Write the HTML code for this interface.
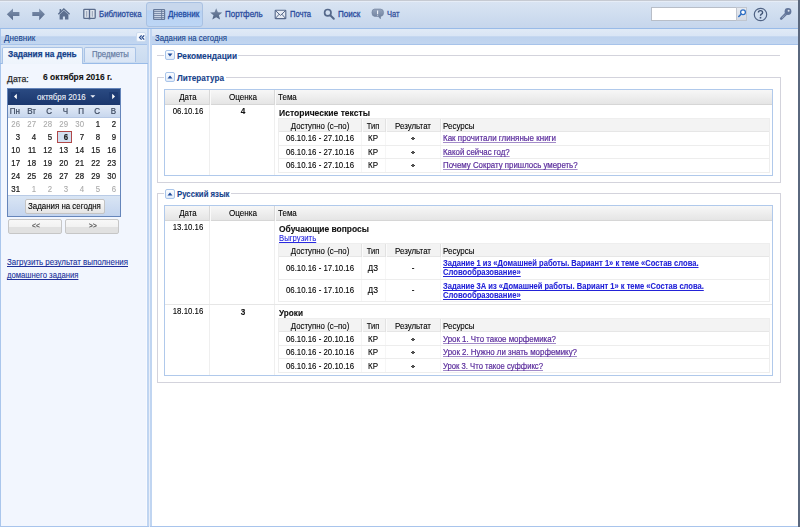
<!DOCTYPE html>
<html><head><meta charset="utf-8">
<style>
*{box-sizing:border-box;margin:0;padding:0}
html,body{width:800px;height:527px;overflow:hidden;background:#fff;font-family:"Liberation Sans",sans-serif;font-size:8px;color:#000;position:relative}
.a{position:absolute;white-space:nowrap;text-decoration-skip-ink:none;-webkit-text-stroke-width:0.1px}
svg{position:absolute;overflow:visible}
</style></head>
<body><div style="position:absolute;left:0;top:0;width:800px;height:527px;filter:blur(0.3px)">

<div class="a" style="left:0px;top:0px;width:800px;height:28px;background:linear-gradient(#dae5f3,#c6d6ec)"></div>
<div class="a" style="left:0px;top:0px;width:800px;height:1px;background:#c6cad2"></div>
<div class="a" style="left:0px;top:1px;width:800px;height:1px;background:#e6edf7"></div>
<div class="a" style="left:0px;top:28px;width:800px;height:1px;background:#99bbe8"></div>
<svg style="left:6px;top:8px" width="14" height="13" viewBox="0 0 14 13"><defs><linearGradient id="ag" x1="0" y1="0" x2="0" y2="1"><stop offset="0" stop-color="#8092ae"/><stop offset="1" stop-color="#56698a"/></linearGradient></defs><path d="M0.8 6.2 L7 0.5 L7 4.1 L13.4 4.1 L13.4 8 L7 8 L7 12.2 Z" fill="url(#ag)"/></svg>
<svg style="left:32px;top:8px" width="14" height="13" viewBox="0 0 14 13"><defs><linearGradient id="ag2" x1="0" y1="0" x2="0" y2="1"><stop offset="0" stop-color="#8092ae"/><stop offset="1" stop-color="#56698a"/></linearGradient></defs><path d="M12.9 6.2 L7.2 0.5 L7.2 4.1 L0.3 4.1 L0.3 8 L7.2 8 L7.2 12.2 Z" fill="url(#ag2)"/></svg>
<svg style="left:57px;top:7px" width="14" height="13" viewBox="0 0 14 13"><path d="M2.6 2 H4.2 V5 L2.6 6.4 Z" fill="#5c6f8f"/><path d="M1.3 7.3 L6.85 2 L12.6 7.3" fill="none" stroke="#5c6f8f" stroke-width="1.4"/><path d="M2.6 7.4 L6.85 3.6 L11.4 7.4 V12.4 H8 V9.6 H5.9 V12.4 H2.6 Z" fill="#5c6f8f"/></svg>
<svg style="left:83px;top:9px" width="13" height="12" viewBox="0 0 13 12"><path d="M0.8 0.9 Q0.8 0.3 1.6 0.3 H6.5 V9.4 H1.6 Q0.8 9.4 0.8 8.6 Z M6.5 0.3 H11.4 Q12.2 0.3 12.2 0.9 V8.6 Q12.2 9.4 11.4 9.4 H6.5 Z" fill="#dfe5ee" stroke="#5a6c8c" stroke-width="1.3"/><path d="M3.6 2 V7.8 M9.4 2 V7.8" stroke="#a3adbf" stroke-width="1.3"/><path d="M6.5 0.3 V9.8" stroke="#52648a" stroke-width="1.1"/><path d="M5.6 10 H7.4" stroke="#5a6c8c" stroke-width="0.9"/></svg>
<div class="a" style="left:99px;top:9.80px;font-size:8.5px;line-height:8.5px;color:#2b4c9e;transform:scale(0.9195,1.0);transform-origin:left 7.20px;-webkit-text-stroke:0.3px #2b4c9e;">Библиотека</div>
<div class="a" style="left:146px;top:2px;width:57px;height:25px;border:1px solid #a9c1e2;border-radius:3px;background:linear-gradient(#c8d7ec 0,#c8d7ec 30%,#b8d2f3 34%,#bdd6f5 100%)"></div>
<svg style="left:153px;top:9px" width="12" height="11" viewBox="0 0 12 11"><rect x="0.6" y="0.6" width="11" height="9.8" rx="0.6" fill="#d6e0ee" stroke="#66799a" stroke-width="1.2"/><path d="M0.6 2.6 H11.6 M0.6 4.6 H11.6 M0.6 6.6 H11.6 M0.6 8.6 H11.6 M8.6 0.6 V10.4" stroke="#66799a" stroke-width="0.9"/></svg>
<div class="a" style="left:168px;top:9.80px;font-size:8.5px;line-height:8.5px;color:#214ca4;transform:scale(0.9495,1.0);transform-origin:left 7.20px;-webkit-text-stroke:0.3px #214ca4;">Дневник</div>
<svg style="left:210px;top:8px" width="13" height="12" viewBox="0 0 13 12"><defs><linearGradient id="sg" x1="0" y1="0" x2="0" y2="1"><stop offset="0" stop-color="#7a8ba6"/><stop offset="1" stop-color="#4f6283"/></linearGradient></defs><path d="M6.2 0.3 L7.9 4.3 L12.3 4.5 L8.9 7.3 L10.1 11.6 L6.2 9.2 L2.3 11.6 L3.5 7.3 L0.1 4.5 L4.5 4.3 Z" fill="url(#sg)"/></svg>
<div class="a" style="left:225px;top:9.80px;font-size:8.5px;line-height:8.5px;color:#2b4c9e;transform:scale(0.9399,1.0);transform-origin:left 7.20px;-webkit-text-stroke:0.3px #2b4c9e;">Портфель</div>
<svg style="left:274px;top:9px" width="13" height="11" viewBox="0 0 13 11"><rect x="1.2" y="1.3" width="10.6" height="8.3" rx="0.5" fill="#e6ebf3" stroke="#56688a" stroke-width="1.1"/><path d="M1.4 1.5 L6.5 6.4 L11.6 1.5 M1.4 9.4 L5.2 5.2 M11.6 9.4 L7.8 5.2" stroke="#56688a" stroke-width="1" fill="none"/></svg>
<div class="a" style="left:289.5px;top:9.80px;font-size:8.5px;line-height:8.5px;color:#2b4c9e;transform:scale(0.8937,1.0);transform-origin:left 7.20px;-webkit-text-stroke:0.3px #2b4c9e;">Почта</div>
<svg style="left:322px;top:7px" width="14" height="14" viewBox="0 0 14 14"><circle cx="5.8" cy="5.7" r="3.2" fill="none" stroke="#55688a" stroke-width="1.7"/><path d="M8.5 8.5 L11.8 11.8" stroke="#55688a" stroke-width="2" stroke-linecap="round"/></svg>
<div class="a" style="left:338px;top:9.80px;font-size:8.5px;line-height:8.5px;color:#2b4c9e;transform:scale(0.9464,1.0);transform-origin:left 7.20px;-webkit-text-stroke:0.3px #2b4c9e;">Поиск</div>
<svg style="left:371px;top:8px" width="14" height="13" viewBox="0 0 14 13"><defs><linearGradient id="cg" x1="0" y1="0" x2="0" y2="1"><stop offset="0" stop-color="#95a4bc"/><stop offset="1" stop-color="#6a7c9b"/></linearGradient></defs><path d="M3.6 1 H9.4 Q12.6 1 12.6 4.6 Q12.6 8.4 9.4 8.4 H9.6 L9.4 10.8 L7.4 8.4 H3.6 Q0.9 8.4 0.9 4.6 Q0.9 1 3.6 1 Z" fill="url(#cg)" stroke="#6e7f9c" stroke-width="0.6"/><path d="M6.6 2.6 V5.9 M6.6 6.8 V7.6" stroke="#f2f5fa" stroke-width="1.1"/></svg>
<div class="a" style="left:387.2px;top:9.80px;font-size:8.5px;line-height:8.5px;color:#34519c;transform:scale(0.8859,1.0);transform-origin:left 7.20px;-webkit-text-stroke:0.3px #34519c;">Чат</div>
<div class="a" style="left:651px;top:7px;width:86px;height:14px;background:#fff;border:1px solid #b8bec8;border-right:none"></div>
<div class="a" style="left:736px;top:7px;width:11px;height:14px;background:linear-gradient(#e6eaf0,#d4dae4);border:1px solid #c0c6d0"></div>
<svg style="left:737px;top:8px" width="10" height="11" viewBox="0 0 10 11"><circle cx="6" cy="4.2" r="2.4" fill="#fff" stroke="#2f6fc4" stroke-width="1.3"/><path d="M4.3 6 L1.8 8.5" stroke="#2f6fc4" stroke-width="1.6" stroke-linecap="round"/></svg>
<svg style="left:753px;top:7px" width="15" height="15" viewBox="0 0 15 15"><circle cx="7.5" cy="7.5" r="6.2" fill="none" stroke="#4f6284" stroke-width="1.2"/><path d="M5.4 5.6 Q5.4 3.6 7.5 3.6 Q9.6 3.6 9.6 5.4 Q9.6 6.6 8.4 7.2 Q7.5 7.7 7.5 8.8" fill="none" stroke="#3f5274" stroke-width="1.4"/><rect x="6.7" y="9.9" width="1.6" height="1.6" fill="#3f5274"/></svg>
<svg style="left:779px;top:7px" width="14" height="14" viewBox="0 0 14 14"><circle cx="9" cy="4.5" r="3.4" fill="#62759a"/><circle cx="9.6" cy="3.7" r="1" fill="#dfe6f1"/><path d="M6.8 7 L2.2 11.6" stroke="#62759a" stroke-width="2.6" stroke-linecap="round"/><path d="M6.3 7.6 L2.6 11.2" stroke="#cfd8e6" stroke-width="0.7" stroke-dasharray="1 0.8"/></svg>
<div class="a" style="left:0px;top:29px;width:147px;height:498px;background:#f2f6fe"></div>
<div class="a" style="left:0px;top:29px;width:1px;height:498px;background:#aac6ec"></div>
<div class="a" style="left:146px;top:45px;width:1px;height:481px;background:#f8faff"></div>
<div class="a" style="left:147px;top:29px;width:2px;height:498px;background:#c0d5f1"></div>
<div class="a" style="left:0px;top:526px;width:149px;height:1px;background:#a8c4ec"></div>
<div class="a" style="left:1px;top:29px;width:146px;height:15px;background:linear-gradient(#e0eaf6 0,#d9e5f5 45%,#bdd2ee 52%,#c2d6f0 100%)"></div>
<div class="a" style="left:0px;top:44px;width:147px;height:1px;background:#a7c3ea"></div>
<div class="a" style="left:3.8px;top:33.80px;font-size:8.5px;line-height:8.5px;color:#15428b;transform:scale(0.9495,1.0);transform-origin:left 7.20px;">Дневник</div>
<div class="a" style="left:136px;top:32px;width:10px;height:10px;background:#f4f8fd;border:1px solid #cddcef;border-radius:2px"></div>
<svg style="left:139px;top:35px" width="6" height="5" viewBox="0 0 6 5"><path d="M2.6 0.4 L0.6 2.5 L2.6 4.6 M5.2 0.4 L3.2 2.5 L5.2 4.6" fill="none" stroke="#2d4f90" stroke-width="1.3"/></svg>
<div class="a" style="left:1px;top:45px;width:146px;height:18px;background:linear-gradient(#d4e2f3,#cadbf0)"></div>
<div class="a" style="left:0px;top:63px;width:148px;height:1px;background:#99bbe8"></div>
<div class="a" style="left:2px;top:47px;width:81px;height:17px;background:linear-gradient(#f4f8fd,#eef4fc);border:1px solid #a9c3e6;border-bottom:none;border-radius:2px 2px 0 0"></div>
<div class="a" style="left:8.4px;top:49.80px;font-size:8.5px;line-height:8.5px;color:#15428b;font-weight:700;transform:scale(0.9722,1.0);transform-origin:left 7.20px;-webkit-text-stroke-width:0.25px;">Задания на день</div>
<div class="a" style="left:84px;top:47px;width:52px;height:15px;background:linear-gradient(#e3ecf8,#d9e5f5);border:1px solid #a9c3e6;border-bottom:none;border-radius:2px 2px 0 0"></div>
<div class="a" style="left:91.6px;top:49.80px;font-size:8.5px;line-height:8.5px;color:#6a7fa6;transform:scale(0.9055,1.0);transform-origin:left 7.20px;-webkit-text-stroke-width:0.25px;">Предметы</div>
<div class="a" style="left:7.2px;top:74.58px;font-size:9px;line-height:9px;color:#2a2a2a;transform:scale(0.9716,1.0);transform-origin:left 7.62px;-webkit-text-stroke-width:0.25px;">Дата:</div>
<div class="a" style="left:42.6px;top:73.30px;font-size:8.5px;line-height:8.5px;color:#111;font-weight:700;transform:scale(0.9908,1.0);transform-origin:left 7.20px;">6 октября 2016 г.</div>
<div class="a" style="left:7px;top:88px;width:114px;height:129px;border:1px solid #6585ba;background:#fff"></div>
<div class="a" style="left:8px;top:89px;width:112px;height:16px;background:linear-gradient(#2a4a82,#1b376d)"></div>
<div class="a" style="left:11px;top:92px;width:9px;height:9px;background:#1d3b73;border-radius:1px"></div>
<svg style="left:13px;top:93px" width="5" height="7" viewBox="0 0 5 7"><path d="M3.8 0.8 L1 3.5 L3.8 6.2 Z" fill="#fff"/></svg>
<div class="a" style="left:109px;top:92px;width:9px;height:9px;background:#1d3b73;border-radius:1px"></div>
<svg style="left:111px;top:93px" width="5" height="7" viewBox="0 0 5 7"><path d="M1.2 0.8 L4 3.5 L1.2 6.2 Z" fill="#fff"/></svg>
<div class="a" style="left:37.25px;top:93.00px;font-size:8.5px;line-height:8.5px;color:#eef2fa;transform:scale(0.9300,1.0);transform-origin:left 7.20px;">октября 2016</div>
<svg style="left:90px;top:95px" width="6" height="4" viewBox="0 0 6 4"><path d="M0.3 0.3 H5.3 L2.8 2.8 Z" fill="#eef2fa"/></svg>
<div class="a" style="left:8px;top:105px;width:112px;height:13px;background:linear-gradient(#e3ebf6,#c8d7ee);border-bottom:1px solid #b6c8e4"></div>
<div class="a" style="left:-279.8px;width:300px;text-align:right;top:107.00px;font-size:8.5px;line-height:8.5px;color:#3a475e;transform:scale(0.9400,1.0);transform-origin:right 7.20px;-webkit-text-stroke:0.2px #3a475e;">Пн</div>
<div class="a" style="left:-263.7px;width:300px;text-align:right;top:107.00px;font-size:8.5px;line-height:8.5px;color:#3a475e;transform:scale(0.9400,1.0);transform-origin:right 7.20px;-webkit-text-stroke:0.2px #3a475e;">Вт</div>
<div class="a" style="left:-247.7px;width:300px;text-align:right;top:107.00px;font-size:8.5px;line-height:8.5px;color:#3a475e;transform:scale(0.9400,1.0);transform-origin:right 7.20px;-webkit-text-stroke:0.2px #3a475e;">С</div>
<div class="a" style="left:-231.7px;width:300px;text-align:right;top:107.00px;font-size:8.5px;line-height:8.5px;color:#3a475e;transform:scale(0.9400,1.0);transform-origin:right 7.20px;-webkit-text-stroke:0.2px #3a475e;">Ч</div>
<div class="a" style="left:-215.7px;width:300px;text-align:right;top:107.00px;font-size:8.5px;line-height:8.5px;color:#3a475e;transform:scale(0.9400,1.0);transform-origin:right 7.20px;-webkit-text-stroke:0.2px #3a475e;">П</div>
<div class="a" style="left:-199.7px;width:300px;text-align:right;top:107.00px;font-size:8.5px;line-height:8.5px;color:#3a475e;transform:scale(0.9400,1.0);transform-origin:right 7.20px;-webkit-text-stroke:0.2px #3a475e;">С</div>
<div class="a" style="left:-183.6px;width:300px;text-align:right;top:107.00px;font-size:8.5px;line-height:8.5px;color:#3a475e;transform:scale(0.9400,1.0);transform-origin:right 7.20px;-webkit-text-stroke:0.2px #3a475e;">В</div>
<div class="a" style="left:57px;top:131px;width:15px;height:12px;background:#d3e0f1;border:1px solid #b04848"></div>
<div class="a" style="left:-279.8px;width:300px;text-align:right;top:120.10px;font-size:8.5px;line-height:8.5px;color:#aaaaaa;transform:scale(0.9200,1.0);transform-origin:right 7.20px;">26</div>
<div class="a" style="left:-263.7px;width:300px;text-align:right;top:120.10px;font-size:8.5px;line-height:8.5px;color:#aaaaaa;transform:scale(0.9200,1.0);transform-origin:right 7.20px;">27</div>
<div class="a" style="left:-247.7px;width:300px;text-align:right;top:120.10px;font-size:8.5px;line-height:8.5px;color:#aaaaaa;transform:scale(0.9200,1.0);transform-origin:right 7.20px;">28</div>
<div class="a" style="left:-231.7px;width:300px;text-align:right;top:120.10px;font-size:8.5px;line-height:8.5px;color:#aaaaaa;transform:scale(0.9200,1.0);transform-origin:right 7.20px;">29</div>
<div class="a" style="left:-215.7px;width:300px;text-align:right;top:120.10px;font-size:8.5px;line-height:8.5px;color:#aaaaaa;transform:scale(0.9200,1.0);transform-origin:right 7.20px;">30</div>
<div class="a" style="left:-199.7px;width:300px;text-align:right;top:120.10px;font-size:8.5px;line-height:8.5px;color:#1a1a1a;transform:scale(0.9200,1.0);transform-origin:right 7.20px;-webkit-text-stroke:0.22px #1a1a1a;">1</div>
<div class="a" style="left:-183.6px;width:300px;text-align:right;top:120.10px;font-size:8.5px;line-height:8.5px;color:#1a1a1a;transform:scale(0.9200,1.0);transform-origin:right 7.20px;-webkit-text-stroke:0.22px #1a1a1a;">2</div>
<div class="a" style="left:-279.8px;width:300px;text-align:right;top:133.00px;font-size:8.5px;line-height:8.5px;color:#1a1a1a;transform:scale(0.9200,1.0);transform-origin:right 7.20px;-webkit-text-stroke:0.22px #1a1a1a;">3</div>
<div class="a" style="left:-263.7px;width:300px;text-align:right;top:133.00px;font-size:8.5px;line-height:8.5px;color:#1a1a1a;transform:scale(0.9200,1.0);transform-origin:right 7.20px;-webkit-text-stroke:0.22px #1a1a1a;">4</div>
<div class="a" style="left:-247.7px;width:300px;text-align:right;top:133.00px;font-size:8.5px;line-height:8.5px;color:#1a1a1a;transform:scale(0.9200,1.0);transform-origin:right 7.20px;-webkit-text-stroke:0.22px #1a1a1a;">5</div>
<div class="a" style="left:-231.7px;width:300px;text-align:right;top:133.00px;font-size:8.5px;line-height:8.5px;color:#1a1a1a;font-weight:700;transform:scale(0.9200,1.0);transform-origin:right 7.20px;-webkit-text-stroke:0.22px #1a1a1a;">6</div>
<div class="a" style="left:-215.7px;width:300px;text-align:right;top:133.00px;font-size:8.5px;line-height:8.5px;color:#1a1a1a;transform:scale(0.9200,1.0);transform-origin:right 7.20px;-webkit-text-stroke:0.22px #1a1a1a;">7</div>
<div class="a" style="left:-199.7px;width:300px;text-align:right;top:133.00px;font-size:8.5px;line-height:8.5px;color:#1a1a1a;transform:scale(0.9200,1.0);transform-origin:right 7.20px;-webkit-text-stroke:0.22px #1a1a1a;">8</div>
<div class="a" style="left:-183.6px;width:300px;text-align:right;top:133.00px;font-size:8.5px;line-height:8.5px;color:#1a1a1a;transform:scale(0.9200,1.0);transform-origin:right 7.20px;-webkit-text-stroke:0.22px #1a1a1a;">9</div>
<div class="a" style="left:-279.8px;width:300px;text-align:right;top:145.90px;font-size:8.5px;line-height:8.5px;color:#1a1a1a;transform:scale(0.9200,1.0);transform-origin:right 7.20px;-webkit-text-stroke:0.22px #1a1a1a;">10</div>
<div class="a" style="left:-263.7px;width:300px;text-align:right;top:145.90px;font-size:8.5px;line-height:8.5px;color:#1a1a1a;transform:scale(0.9200,1.0);transform-origin:right 7.20px;-webkit-text-stroke:0.22px #1a1a1a;">11</div>
<div class="a" style="left:-247.7px;width:300px;text-align:right;top:145.90px;font-size:8.5px;line-height:8.5px;color:#1a1a1a;transform:scale(0.9200,1.0);transform-origin:right 7.20px;-webkit-text-stroke:0.22px #1a1a1a;">12</div>
<div class="a" style="left:-231.7px;width:300px;text-align:right;top:145.90px;font-size:8.5px;line-height:8.5px;color:#1a1a1a;transform:scale(0.9200,1.0);transform-origin:right 7.20px;-webkit-text-stroke:0.22px #1a1a1a;">13</div>
<div class="a" style="left:-215.7px;width:300px;text-align:right;top:145.90px;font-size:8.5px;line-height:8.5px;color:#1a1a1a;transform:scale(0.9200,1.0);transform-origin:right 7.20px;-webkit-text-stroke:0.22px #1a1a1a;">14</div>
<div class="a" style="left:-199.7px;width:300px;text-align:right;top:145.90px;font-size:8.5px;line-height:8.5px;color:#1a1a1a;transform:scale(0.9200,1.0);transform-origin:right 7.20px;-webkit-text-stroke:0.22px #1a1a1a;">15</div>
<div class="a" style="left:-183.6px;width:300px;text-align:right;top:145.90px;font-size:8.5px;line-height:8.5px;color:#1a1a1a;transform:scale(0.9200,1.0);transform-origin:right 7.20px;-webkit-text-stroke:0.22px #1a1a1a;">16</div>
<div class="a" style="left:-279.8px;width:300px;text-align:right;top:158.80px;font-size:8.5px;line-height:8.5px;color:#1a1a1a;transform:scale(0.9200,1.0);transform-origin:right 7.20px;-webkit-text-stroke:0.22px #1a1a1a;">17</div>
<div class="a" style="left:-263.7px;width:300px;text-align:right;top:158.80px;font-size:8.5px;line-height:8.5px;color:#1a1a1a;transform:scale(0.9200,1.0);transform-origin:right 7.20px;-webkit-text-stroke:0.22px #1a1a1a;">18</div>
<div class="a" style="left:-247.7px;width:300px;text-align:right;top:158.80px;font-size:8.5px;line-height:8.5px;color:#1a1a1a;transform:scale(0.9200,1.0);transform-origin:right 7.20px;-webkit-text-stroke:0.22px #1a1a1a;">19</div>
<div class="a" style="left:-231.7px;width:300px;text-align:right;top:158.80px;font-size:8.5px;line-height:8.5px;color:#1a1a1a;transform:scale(0.9200,1.0);transform-origin:right 7.20px;-webkit-text-stroke:0.22px #1a1a1a;">20</div>
<div class="a" style="left:-215.7px;width:300px;text-align:right;top:158.80px;font-size:8.5px;line-height:8.5px;color:#1a1a1a;transform:scale(0.9200,1.0);transform-origin:right 7.20px;-webkit-text-stroke:0.22px #1a1a1a;">21</div>
<div class="a" style="left:-199.7px;width:300px;text-align:right;top:158.80px;font-size:8.5px;line-height:8.5px;color:#1a1a1a;transform:scale(0.9200,1.0);transform-origin:right 7.20px;-webkit-text-stroke:0.22px #1a1a1a;">22</div>
<div class="a" style="left:-183.6px;width:300px;text-align:right;top:158.80px;font-size:8.5px;line-height:8.5px;color:#1a1a1a;transform:scale(0.9200,1.0);transform-origin:right 7.20px;-webkit-text-stroke:0.22px #1a1a1a;">23</div>
<div class="a" style="left:-279.8px;width:300px;text-align:right;top:171.70px;font-size:8.5px;line-height:8.5px;color:#1a1a1a;transform:scale(0.9200,1.0);transform-origin:right 7.20px;-webkit-text-stroke:0.22px #1a1a1a;">24</div>
<div class="a" style="left:-263.7px;width:300px;text-align:right;top:171.70px;font-size:8.5px;line-height:8.5px;color:#1a1a1a;transform:scale(0.9200,1.0);transform-origin:right 7.20px;-webkit-text-stroke:0.22px #1a1a1a;">25</div>
<div class="a" style="left:-247.7px;width:300px;text-align:right;top:171.70px;font-size:8.5px;line-height:8.5px;color:#1a1a1a;transform:scale(0.9200,1.0);transform-origin:right 7.20px;-webkit-text-stroke:0.22px #1a1a1a;">26</div>
<div class="a" style="left:-231.7px;width:300px;text-align:right;top:171.70px;font-size:8.5px;line-height:8.5px;color:#1a1a1a;transform:scale(0.9200,1.0);transform-origin:right 7.20px;-webkit-text-stroke:0.22px #1a1a1a;">27</div>
<div class="a" style="left:-215.7px;width:300px;text-align:right;top:171.70px;font-size:8.5px;line-height:8.5px;color:#1a1a1a;transform:scale(0.9200,1.0);transform-origin:right 7.20px;-webkit-text-stroke:0.22px #1a1a1a;">28</div>
<div class="a" style="left:-199.7px;width:300px;text-align:right;top:171.70px;font-size:8.5px;line-height:8.5px;color:#1a1a1a;transform:scale(0.9200,1.0);transform-origin:right 7.20px;-webkit-text-stroke:0.22px #1a1a1a;">29</div>
<div class="a" style="left:-183.6px;width:300px;text-align:right;top:171.70px;font-size:8.5px;line-height:8.5px;color:#1a1a1a;transform:scale(0.9200,1.0);transform-origin:right 7.20px;-webkit-text-stroke:0.22px #1a1a1a;">30</div>
<div class="a" style="left:-279.8px;width:300px;text-align:right;top:184.60px;font-size:8.5px;line-height:8.5px;color:#1a1a1a;transform:scale(0.9200,1.0);transform-origin:right 7.20px;-webkit-text-stroke:0.22px #1a1a1a;">31</div>
<div class="a" style="left:-263.7px;width:300px;text-align:right;top:184.60px;font-size:8.5px;line-height:8.5px;color:#aaaaaa;transform:scale(0.9200,1.0);transform-origin:right 7.20px;">1</div>
<div class="a" style="left:-247.7px;width:300px;text-align:right;top:184.60px;font-size:8.5px;line-height:8.5px;color:#aaaaaa;transform:scale(0.9200,1.0);transform-origin:right 7.20px;">2</div>
<div class="a" style="left:-231.7px;width:300px;text-align:right;top:184.60px;font-size:8.5px;line-height:8.5px;color:#aaaaaa;transform:scale(0.9200,1.0);transform-origin:right 7.20px;">3</div>
<div class="a" style="left:-215.7px;width:300px;text-align:right;top:184.60px;font-size:8.5px;line-height:8.5px;color:#aaaaaa;transform:scale(0.9200,1.0);transform-origin:right 7.20px;">4</div>
<div class="a" style="left:-199.7px;width:300px;text-align:right;top:184.60px;font-size:8.5px;line-height:8.5px;color:#aaaaaa;transform:scale(0.9200,1.0);transform-origin:right 7.20px;">5</div>
<div class="a" style="left:-183.6px;width:300px;text-align:right;top:184.60px;font-size:8.5px;line-height:8.5px;color:#aaaaaa;transform:scale(0.9200,1.0);transform-origin:right 7.20px;">6</div>
<div class="a" style="left:8px;top:195px;width:112px;height:21px;background:linear-gradient(#d9e5f4,#c3d4ee);border-top:1px solid #b9cbe6"></div>
<div class="a" style="left:25px;top:199px;width:80px;height:15px;background:linear-gradient(#fcfcfc,#e4e4e4);border:1px solid #c4c4c4;border-radius:2px"></div>
<div class="a" style="left:28.1px;top:202.00px;font-size:8.5px;line-height:8.5px;color:#000;transform:scale(0.9294,1.0);transform-origin:left 7.20px;">Задания на сегодня</div>
<div class="a" style="left:8px;top:219px;width:54px;height:15px;background:linear-gradient(#f8f8f8 0,#f2f2f2 50%,#e1e1e1 55%,#e1e1e1 100%);border:1px solid #c6c6c6;border-radius:2px"></div>
<div class="a" style="left:-114.5px;width:300px;text-align:center;top:222.27px;font-size:7px;line-height:7px;color:#5a5a5a;font-weight:700;transform:scale(0.9500,1.0);transform-origin:center 5.93px;">&lt;&lt;</div>
<div class="a" style="left:65px;top:219px;width:54px;height:15px;background:linear-gradient(#f8f8f8 0,#f2f2f2 50%,#e1e1e1 55%,#e1e1e1 100%);border:1px solid #c6c6c6;border-radius:2px"></div>
<div class="a" style="left:-57.5px;width:300px;text-align:center;top:222.27px;font-size:7px;line-height:7px;color:#5a5a5a;font-weight:700;transform:scale(0.9500,1.0);transform-origin:center 5.93px;">&gt;&gt;</div>
<div class="a" style="left:7px;top:257.70px;font-size:8.5px;line-height:8.5px;color:#20309a;transform:scale(0.9320,1.0);transform-origin:left 7.20px;text-decoration:underline;">Загрузить результат выполнения</div>
<div class="a" style="left:7px;top:270.50px;font-size:8.5px;line-height:8.5px;color:#20309a;transform:scale(0.9054,1.0);transform-origin:left 7.20px;text-decoration:underline;">домашнего задания</div>
<div class="a" style="left:149px;top:29px;width:1px;height:498px;background:#e8eef9"></div>
<div class="a" style="left:152px;top:29px;width:646px;height:498px;background:#fff"></div>
<div class="a" style="left:150px;top:29px;width:2px;height:498px;background:#c0d5f1"></div>
<div class="a" style="left:150px;top:526px;width:648px;height:1px;background:#a8c4ec"></div>
<div class="a" style="left:152px;top:29px;width:646px;height:15px;background:linear-gradient(#e0eaf6 0,#d9e5f5 45%,#bdd2ee 52%,#c2d6f0 100%)"></div>
<div class="a" style="left:152px;top:44px;width:646px;height:1px;background:#a7c3ea"></div>
<div class="a" style="left:154.75px;top:34.00px;font-size:8.5px;line-height:8.5px;color:#15428b;transform:scale(0.9179,1.0);transform-origin:left 7.20px;">Задания на сегодня</div>
<div class="a" style="left:165px;top:50px;width:10px;height:10px;background:linear-gradient(#fbfdff,#e2ecf9);border:1px solid #a9c5ea;border-radius:2px"></div>
<svg style="left:167px;top:53px" width="6" height="4" viewBox="0 0 6 4"><path d="M0.5 0.5 H5.5 L3 3.5 Z" fill="#1d4a9c"/></svg>
<div class="a" style="left:177px;top:52.00px;font-size:8.5px;line-height:8.5px;color:#15428b;font-weight:700;transform:scale(0.9778,1.0);transform-origin:left 7.20px;">Рекомендации</div>
<div class="a" style="left:157px;top:55px;width:7px;height:1px;background:#d3d3dc"></div>
<div class="a" style="left:238px;top:55px;width:542px;height:1px;background:#d3d3dc"></div>
<div class="a" style="left:157px;top:77px;width:624px;height:106px;border:1px solid #d3d3dc"></div>
<div class="a" style="left:160px;top:75px;width:70px;height:4px;background:#fff"></div>
<div class="a" style="left:157px;top:77px;width:7px;height:1px;background:#d3d3dc"></div>
<div class="a" style="left:226px;top:77px;width:554px;height:1px;background:#d3d3dc"></div>
<div class="a" style="left:165px;top:72px;width:10px;height:10px;background:linear-gradient(#fbfdff,#e2ecf9);border:1px solid #a9c5ea;border-radius:2px"></div>
<svg style="left:167px;top:75px" width="6" height="4" viewBox="0 0 6 4"><path d="M0.5 3.5 H5.5 L3 0.5 Z" fill="#1d4a9c"/></svg>
<div class="a" style="left:177px;top:74.00px;font-size:8.5px;line-height:8.5px;color:#15428b;font-weight:700;transform:scale(0.9607,1.0);transform-origin:left 7.20px;">Литература</div>
<div class="a" style="left:164px;top:89px;width:609px;height:87px;border:1px solid #b0c9eb;background:#fff"></div>
<div class="a" style="left:165px;top:90px;width:607px;height:15px;background:linear-gradient(#f7f7f7,#e5e5e5);border-bottom:1px solid #d6d6d6"></div>
<div class="a" style="left:209px;top:90px;width:1px;height:15px;background:#d8d8d8"></div>
<div class="a" style="left:210px;top:90px;width:1px;height:15px;background:#fafafa"></div>
<div class="a" style="left:274px;top:90px;width:1px;height:15px;background:#d8d8d8"></div>
<div class="a" style="left:275px;top:90px;width:1px;height:15px;background:#fafafa"></div>
<div class="a" style="left:209px;top:105px;width:1px;height:70px;background:#efefef"></div>
<div class="a" style="left:274px;top:105px;width:1px;height:70px;background:#efefef"></div>
<div class="a" style="left:38.25px;width:300px;text-align:center;top:93.00px;font-size:8.5px;line-height:8.5px;color:#000;transform:scale(0.9295,1.0);transform-origin:center 7.20px;">Дата</div>
<div class="a" style="left:93px;width:300px;text-align:center;top:93.00px;font-size:8.5px;line-height:8.5px;color:#000;transform:scale(0.9507,1.0);transform-origin:center 7.20px;">Оценка</div>
<div class="a" style="left:278.3px;top:93.00px;font-size:8.5px;line-height:8.5px;color:#000;transform:scale(0.9400,1.0);transform-origin:left 7.20px;">Тема</div>
<div class="a" style="left:38.19999999999999px;width:300px;text-align:center;top:106.80px;font-size:8.5px;line-height:8.5px;color:#000;transform:scale(0.9216,1.0);transform-origin:center 7.20px;">06.10.16</div>
<div class="a" style="left:93.19999999999999px;width:300px;text-align:center;top:106.80px;font-size:8.5px;line-height:8.5px;color:#111;font-weight:700;transform:scale(0.9650,1.0);transform-origin:center 7.20px;">4</div>
<div class="a" style="left:278.5px;top:109.30px;font-size:8.5px;line-height:8.5px;color:#111;font-weight:700;transform:scale(1.0052,1.0);transform-origin:left 7.20px;">Исторические тексты</div>
<div class="a" style="left:278px;top:118px;width:492px;height:55px;border:1px solid #eeeeee;background:#fff"></div>
<div class="a" style="left:279px;top:119px;width:490px;height:13px;background:#f3f3f3;border-bottom:1px solid #e6e6e6"></div>
<div class="a" style="left:361px;top:119px;width:1px;height:13px;background:#e2e2e2"></div>
<div class="a" style="left:362px;top:119px;width:1px;height:13px;background:#fbfbfb"></div>
<div class="a" style="left:361px;top:132px;width:1px;height:40px;background:#f6f6f6"></div>
<div class="a" style="left:385px;top:119px;width:1px;height:13px;background:#e2e2e2"></div>
<div class="a" style="left:386px;top:119px;width:1px;height:13px;background:#fbfbfb"></div>
<div class="a" style="left:385px;top:132px;width:1px;height:40px;background:#f6f6f6"></div>
<div class="a" style="left:440px;top:119px;width:1px;height:13px;background:#e2e2e2"></div>
<div class="a" style="left:441px;top:119px;width:1px;height:13px;background:#fbfbfb"></div>
<div class="a" style="left:440px;top:132px;width:1px;height:40px;background:#f6f6f6"></div>
<div class="a" style="left:170px;width:300px;text-align:center;top:122.00px;font-size:8.5px;line-height:8.5px;color:#000;transform:scale(0.9222,1.0);transform-origin:center 7.20px;">Доступно (с–по)</div>
<div class="a" style="left:222.7px;width:300px;text-align:center;top:122.00px;font-size:8.5px;line-height:8.5px;color:#000;transform:scale(0.8820,1.0);transform-origin:center 7.20px;">Тип</div>
<div class="a" style="left:262.8px;width:300px;text-align:center;top:122.00px;font-size:8.5px;line-height:8.5px;color:#000;transform:scale(0.9309,1.0);transform-origin:center 7.20px;">Результат</div>
<div class="a" style="left:443px;top:122.00px;font-size:8.5px;line-height:8.5px;color:#000;transform:scale(0.9400,1.0);transform-origin:left 7.20px;">Ресурсы</div>
<div class="a" style="left:279px;top:145px;width:490px;height:1px;background:#ededed"></div>
<div class="a" style="left:279px;top:158px;width:490px;height:1px;background:#ededed"></div>
<div class="a" style="left:170.2px;width:300px;text-align:center;top:134.00px;font-size:8.5px;line-height:8.5px;color:#000;transform:scale(0.9249,1.0);transform-origin:center 7.20px;">06.10.16 - 27.10.16</div>
<div class="a" style="left:223px;width:300px;text-align:center;top:134.00px;font-size:8.5px;line-height:8.5px;color:#000;transform:scale(0.9400,1.0);transform-origin:center 7.20px;">КР</div>
<div class="a" style="left:411px;top:138px;width:4px;height:1px;background:#3a3a3a"></div>
<div class="a" style="left:412px;top:137px;width:2px;height:3px;background:#555"></div>
<div class="a" style="left:443px;top:134.00px;font-size:8.5px;line-height:8.5px;color:#5a2c9c;transform:scale(0.9398,1.0);transform-origin:left 7.20px;text-decoration:underline;text-decoration-color:#a38bc9;-webkit-text-stroke-width:0.2px;">Как прочитали глиняные книги</div>
<div class="a" style="left:170.2px;width:300px;text-align:center;top:148.00px;font-size:8.5px;line-height:8.5px;color:#000;transform:scale(0.9249,1.0);transform-origin:center 7.20px;">06.10.16 - 27.10.16</div>
<div class="a" style="left:223px;width:300px;text-align:center;top:148.00px;font-size:8.5px;line-height:8.5px;color:#000;transform:scale(0.9400,1.0);transform-origin:center 7.20px;">КР</div>
<div class="a" style="left:411px;top:152px;width:4px;height:1px;background:#3a3a3a"></div>
<div class="a" style="left:412px;top:151px;width:2px;height:3px;background:#555"></div>
<div class="a" style="left:443px;top:148.00px;font-size:8.5px;line-height:8.5px;color:#5a2c9c;transform:scale(0.9268,1.0);transform-origin:left 7.20px;text-decoration:underline;text-decoration-color:#a38bc9;-webkit-text-stroke-width:0.2px;">Какой сейчас год?</div>
<div class="a" style="left:170.2px;width:300px;text-align:center;top:161.00px;font-size:8.5px;line-height:8.5px;color:#000;transform:scale(0.9249,1.0);transform-origin:center 7.20px;">06.10.16 - 27.10.16</div>
<div class="a" style="left:223px;width:300px;text-align:center;top:161.00px;font-size:8.5px;line-height:8.5px;color:#000;transform:scale(0.9400,1.0);transform-origin:center 7.20px;">КР</div>
<div class="a" style="left:411px;top:165px;width:4px;height:1px;background:#3a3a3a"></div>
<div class="a" style="left:412px;top:164px;width:2px;height:3px;background:#555"></div>
<div class="a" style="left:443px;top:161.00px;font-size:8.5px;line-height:8.5px;color:#5a2c9c;transform:scale(0.9252,1.0);transform-origin:left 7.20px;text-decoration:underline;text-decoration-color:#a38bc9;-webkit-text-stroke-width:0.2px;">Почему Сократу пришлось умереть?</div>
<div class="a" style="left:157px;top:193px;width:624px;height:190px;border:1px solid #d3d3dc"></div>
<div class="a" style="left:160px;top:191px;width:75px;height:4px;background:#fff"></div>
<div class="a" style="left:157px;top:193px;width:7px;height:1px;background:#d3d3dc"></div>
<div class="a" style="left:231px;top:193px;width:549px;height:1px;background:#d3d3dc"></div>
<div class="a" style="left:165px;top:189px;width:10px;height:10px;background:linear-gradient(#fbfdff,#e2ecf9);border:1px solid #a9c5ea;border-radius:2px"></div>
<svg style="left:167px;top:192px" width="6" height="4" viewBox="0 0 6 4"><path d="M0.5 3.5 H5.5 L3 0.5 Z" fill="#1d4a9c"/></svg>
<div class="a" style="left:177px;top:189.60px;font-size:8.5px;line-height:8.5px;color:#15428b;font-weight:700;transform:scale(0.9145,1.0);transform-origin:left 7.20px;">Русский язык</div>
<div class="a" style="left:164px;top:205px;width:609px;height:171px;border:1px solid #b0c9eb;background:#fff"></div>
<div class="a" style="left:165px;top:206px;width:607px;height:15px;background:linear-gradient(#f7f7f7,#e5e5e5);border-bottom:1px solid #d6d6d6"></div>
<div class="a" style="left:209px;top:206px;width:1px;height:15px;background:#d8d8d8"></div>
<div class="a" style="left:210px;top:206px;width:1px;height:15px;background:#fafafa"></div>
<div class="a" style="left:274px;top:206px;width:1px;height:15px;background:#d8d8d8"></div>
<div class="a" style="left:275px;top:206px;width:1px;height:15px;background:#fafafa"></div>
<div class="a" style="left:209px;top:221px;width:1px;height:154px;background:#efefef"></div>
<div class="a" style="left:274px;top:221px;width:1px;height:154px;background:#efefef"></div>
<div class="a" style="left:38.25px;width:300px;text-align:center;top:209.00px;font-size:8.5px;line-height:8.5px;color:#000;transform:scale(0.9295,1.0);transform-origin:center 7.20px;">Дата</div>
<div class="a" style="left:93px;width:300px;text-align:center;top:209.00px;font-size:8.5px;line-height:8.5px;color:#000;transform:scale(0.9507,1.0);transform-origin:center 7.20px;">Оценка</div>
<div class="a" style="left:278.3px;top:209.00px;font-size:8.5px;line-height:8.5px;color:#000;transform:scale(0.9400,1.0);transform-origin:left 7.20px;">Тема</div>
<div class="a" style="left:38.19999999999999px;width:300px;text-align:center;top:223.00px;font-size:8.5px;line-height:8.5px;color:#000;transform:scale(0.9216,1.0);transform-origin:center 7.20px;">13.10.16</div>
<div class="a" style="left:278.5px;top:225.00px;font-size:8.5px;line-height:8.5px;color:#111;font-weight:700;transform:scale(0.9934,1.0);transform-origin:left 7.20px;">Обучающие вопросы</div>
<div class="a" style="left:278.5px;top:233.60px;font-size:8.5px;line-height:8.5px;color:#2828e0;transform:scale(0.9132,1.0);transform-origin:left 7.20px;text-decoration:underline;">Выгрузить</div>
<div class="a" style="left:278px;top:243px;width:492px;height:59px;border:1px solid #eeeeee;background:#fff"></div>
<div class="a" style="left:279px;top:244px;width:490px;height:13px;background:#f3f3f3;border-bottom:1px solid #e6e6e6"></div>
<div class="a" style="left:361px;top:244px;width:1px;height:13px;background:#e2e2e2"></div>
<div class="a" style="left:362px;top:244px;width:1px;height:13px;background:#fbfbfb"></div>
<div class="a" style="left:361px;top:257px;width:1px;height:44px;background:#f6f6f6"></div>
<div class="a" style="left:385px;top:244px;width:1px;height:13px;background:#e2e2e2"></div>
<div class="a" style="left:386px;top:244px;width:1px;height:13px;background:#fbfbfb"></div>
<div class="a" style="left:385px;top:257px;width:1px;height:44px;background:#f6f6f6"></div>
<div class="a" style="left:440px;top:244px;width:1px;height:13px;background:#e2e2e2"></div>
<div class="a" style="left:441px;top:244px;width:1px;height:13px;background:#fbfbfb"></div>
<div class="a" style="left:440px;top:257px;width:1px;height:44px;background:#f6f6f6"></div>
<div class="a" style="left:170px;width:300px;text-align:center;top:247.00px;font-size:8.5px;line-height:8.5px;color:#000;transform:scale(0.9222,1.0);transform-origin:center 7.20px;">Доступно (с–по)</div>
<div class="a" style="left:222.7px;width:300px;text-align:center;top:247.00px;font-size:8.5px;line-height:8.5px;color:#000;transform:scale(0.8820,1.0);transform-origin:center 7.20px;">Тип</div>
<div class="a" style="left:262.8px;width:300px;text-align:center;top:247.00px;font-size:8.5px;line-height:8.5px;color:#000;transform:scale(0.9309,1.0);transform-origin:center 7.20px;">Результат</div>
<div class="a" style="left:443px;top:247.00px;font-size:8.5px;line-height:8.5px;color:#000;transform:scale(0.9400,1.0);transform-origin:left 7.20px;">Ресурсы</div>
<div class="a" style="left:279px;top:279px;width:490px;height:1px;background:#ededed"></div>
<div class="a" style="left:170.2px;width:300px;text-align:center;top:263.50px;font-size:8.5px;line-height:8.5px;color:#000;transform:scale(0.9249,1.0);transform-origin:center 7.20px;">06.10.16 - 17.10.16</div>
<div class="a" style="left:223px;width:300px;text-align:center;top:263.50px;font-size:8.5px;line-height:8.5px;color:#000;transform:scale(0.9400,1.0);transform-origin:center 7.20px;">ДЗ</div>
<div class="a" style="left:262.8px;width:300px;text-align:center;top:263.50px;font-size:8.5px;line-height:8.5px;color:#000;transform:scale(0.9400,1.0);transform-origin:center 7.20px;">-</div>
<div class="a" style="left:443px;top:259.00px;font-size:8.5px;line-height:8.5px;color:#2323d8;font-weight:700;transform:scale(0.8901,1.0);transform-origin:left 7.20px;text-decoration:underline;">Задание 1 из «Домашней работы. Вариант 1» к теме «Состав слова.</div>
<div class="a" style="left:443px;top:268.00px;font-size:8.5px;line-height:8.5px;color:#2323d8;font-weight:700;transform:scale(0.9009,1.0);transform-origin:left 7.20px;text-decoration:underline;">Словообразование»</div>
<div class="a" style="left:170.2px;width:300px;text-align:center;top:286.35px;font-size:8.5px;line-height:8.5px;color:#000;transform:scale(0.9249,1.0);transform-origin:center 7.20px;">06.10.16 - 17.10.16</div>
<div class="a" style="left:223px;width:300px;text-align:center;top:286.35px;font-size:8.5px;line-height:8.5px;color:#000;transform:scale(0.9400,1.0);transform-origin:center 7.20px;">ДЗ</div>
<div class="a" style="left:262.8px;width:300px;text-align:center;top:286.35px;font-size:8.5px;line-height:8.5px;color:#000;transform:scale(0.9400,1.0);transform-origin:center 7.20px;">-</div>
<div class="a" style="left:443px;top:282.00px;font-size:8.5px;line-height:8.5px;color:#2323d8;font-weight:700;transform:scale(0.8895,1.0);transform-origin:left 7.20px;text-decoration:underline;">Задание 3А из «Домашней работы. Вариант 1» к теме «Состав слова.</div>
<div class="a" style="left:443px;top:290.70px;font-size:8.5px;line-height:8.5px;color:#2323d8;font-weight:700;transform:scale(0.9009,1.0);transform-origin:left 7.20px;text-decoration:underline;">Словообразование»</div>
<div class="a" style="left:165px;top:304px;width:607px;height:1px;background:#e6e6e6"></div>
<div class="a" style="left:38.19999999999999px;width:300px;text-align:center;top:306.80px;font-size:8.5px;line-height:8.5px;color:#000;transform:scale(0.9216,1.0);transform-origin:center 7.20px;">18.10.16</div>
<div class="a" style="left:93.19999999999999px;width:300px;text-align:center;top:307.60px;font-size:8.5px;line-height:8.5px;color:#111;font-weight:700;transform:scale(0.9650,1.0);transform-origin:center 7.20px;">3</div>
<div class="a" style="left:278.5px;top:309.30px;font-size:8.5px;line-height:8.5px;color:#111;font-weight:700;transform:scale(0.9650,1.0);transform-origin:left 7.20px;">Уроки</div>
<div class="a" style="left:278px;top:318px;width:492px;height:55px;border:1px solid #eeeeee;background:#fff"></div>
<div class="a" style="left:279px;top:319px;width:490px;height:13px;background:#f3f3f3;border-bottom:1px solid #e6e6e6"></div>
<div class="a" style="left:361px;top:319px;width:1px;height:13px;background:#e2e2e2"></div>
<div class="a" style="left:362px;top:319px;width:1px;height:13px;background:#fbfbfb"></div>
<div class="a" style="left:361px;top:332px;width:1px;height:40px;background:#f6f6f6"></div>
<div class="a" style="left:385px;top:319px;width:1px;height:13px;background:#e2e2e2"></div>
<div class="a" style="left:386px;top:319px;width:1px;height:13px;background:#fbfbfb"></div>
<div class="a" style="left:385px;top:332px;width:1px;height:40px;background:#f6f6f6"></div>
<div class="a" style="left:440px;top:319px;width:1px;height:13px;background:#e2e2e2"></div>
<div class="a" style="left:441px;top:319px;width:1px;height:13px;background:#fbfbfb"></div>
<div class="a" style="left:440px;top:332px;width:1px;height:40px;background:#f6f6f6"></div>
<div class="a" style="left:170px;width:300px;text-align:center;top:322.00px;font-size:8.5px;line-height:8.5px;color:#000;transform:scale(0.9222,1.0);transform-origin:center 7.20px;">Доступно (с–по)</div>
<div class="a" style="left:222.7px;width:300px;text-align:center;top:322.00px;font-size:8.5px;line-height:8.5px;color:#000;transform:scale(0.8820,1.0);transform-origin:center 7.20px;">Тип</div>
<div class="a" style="left:262.8px;width:300px;text-align:center;top:322.00px;font-size:8.5px;line-height:8.5px;color:#000;transform:scale(0.9309,1.0);transform-origin:center 7.20px;">Результат</div>
<div class="a" style="left:443px;top:322.00px;font-size:8.5px;line-height:8.5px;color:#000;transform:scale(0.9400,1.0);transform-origin:left 7.20px;">Ресурсы</div>
<div class="a" style="left:279px;top:345px;width:490px;height:1px;background:#ededed"></div>
<div class="a" style="left:279px;top:358px;width:490px;height:1px;background:#ededed"></div>
<div class="a" style="left:170.2px;width:300px;text-align:center;top:335.00px;font-size:8.5px;line-height:8.5px;color:#000;transform:scale(0.9249,1.0);transform-origin:center 7.20px;">06.10.16 - 20.10.16</div>
<div class="a" style="left:223px;width:300px;text-align:center;top:335.00px;font-size:8.5px;line-height:8.5px;color:#000;transform:scale(0.9400,1.0);transform-origin:center 7.20px;">КР</div>
<div class="a" style="left:411px;top:339px;width:4px;height:1px;background:#3a3a3a"></div>
<div class="a" style="left:412px;top:338px;width:2px;height:3px;background:#555"></div>
<div class="a" style="left:443px;top:335.00px;font-size:8.5px;line-height:8.5px;color:#5a2c9c;transform:scale(0.9286,1.0);transform-origin:left 7.20px;text-decoration:underline;text-decoration-color:#a38bc9;-webkit-text-stroke-width:0.2px;">Урок 1. Что такое морфемика?</div>
<div class="a" style="left:170.2px;width:300px;text-align:center;top:348.30px;font-size:8.5px;line-height:8.5px;color:#000;transform:scale(0.9249,1.0);transform-origin:center 7.20px;">06.10.16 - 20.10.16</div>
<div class="a" style="left:223px;width:300px;text-align:center;top:348.30px;font-size:8.5px;line-height:8.5px;color:#000;transform:scale(0.9400,1.0);transform-origin:center 7.20px;">КР</div>
<div class="a" style="left:411px;top:352px;width:4px;height:1px;background:#3a3a3a"></div>
<div class="a" style="left:412px;top:351px;width:2px;height:3px;background:#555"></div>
<div class="a" style="left:443px;top:348.30px;font-size:8.5px;line-height:8.5px;color:#5a2c9c;transform:scale(0.9289,1.0);transform-origin:left 7.20px;text-decoration:underline;text-decoration-color:#a38bc9;-webkit-text-stroke-width:0.2px;">Урок 2. Нужно ли знать морфемику?</div>
<div class="a" style="left:170.2px;width:300px;text-align:center;top:362.00px;font-size:8.5px;line-height:8.5px;color:#000;transform:scale(0.9249,1.0);transform-origin:center 7.20px;">06.10.16 - 20.10.16</div>
<div class="a" style="left:223px;width:300px;text-align:center;top:362.00px;font-size:8.5px;line-height:8.5px;color:#000;transform:scale(0.9400,1.0);transform-origin:center 7.20px;">КР</div>
<div class="a" style="left:411px;top:366px;width:4px;height:1px;background:#3a3a3a"></div>
<div class="a" style="left:412px;top:365px;width:2px;height:3px;background:#555"></div>
<div class="a" style="left:443px;top:362.00px;font-size:8.5px;line-height:8.5px;color:#5a2c9c;transform:scale(0.9037,1.0);transform-origin:left 7.20px;text-decoration:underline;text-decoration-color:#a38bc9;-webkit-text-stroke-width:0.2px;">Урок 3. Что такое суффикс?</div>
<div class="a" style="left:798px;top:0px;width:2px;height:527px;background:#5a687e"></div>
</div></body></html>
